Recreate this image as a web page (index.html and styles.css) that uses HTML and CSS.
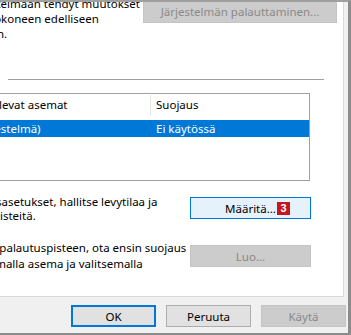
FILE: index.html
```html
<!DOCTYPE html>
<html lang="fi">
<head>
<meta charset="utf-8">
<title>Järjestelmän suojaus</title>
<link rel="stylesheet" href="styles.css">
</head>
<body>
<div class="window">
  <div class="panel">
    <section class="restore">
      <p class="desc">Voit kumota järjestelmään tehdyt muutokset<br>palauttamalla tietokoneen edelliseen<br>palautuspisteeseen.</p>
      <button class="btn disabled wide" disabled>Järjestelmän palauttaminen...</button>
    </section>
    <hr class="sep">
    <div class="list">
      <div class="list-head">
        <div class="hcell c1">Käytettävissä olevat asemat</div>
        <div class="hcell c2">Suojaus</div>
      </div>
      <div class="list-row selected">
        <div class="rcell c1">
          <svg class="drive" width="16" height="16" viewBox="0 0 16 16"><rect x="1" y="8" width="14" height="6" rx="1" fill="#d8d8d8" stroke="#7a7a7a"/><rect x="3" y="3" width="3" height="3" fill="#00a4ef"/><rect x="7" y="3" width="3" height="3" fill="#00a4ef"/><rect x="3" y="6" width="3" height="1.5" fill="#00a4ef"/><rect x="7" y="6" width="3" height="1.5" fill="#00a4ef"/><rect x="11" y="11" width="2" height="1" fill="#3c3"/></svg>
          <span>OS (C:) (Järjestelmä)</span>
        </div>
        <div class="rcell c2">Ei käytössä</div>
      </div>
    </div>
    <div class="action first">
      <p class="text t2">Määritä palautusasetukset, hallitse levytilaa ja<br>poista palautuspisteitä.</p>
      <button class="btn hot">Määritä...<span class="badge">3</span></button>
    </div>
    <div class="action second">
      <p class="text t3">Jos haluat luoda palautuspisteen, ota ensin suojaus<br>käyttöön valitsemalla asema ja valitsemalla<br>Määritä.</p>
      <button class="btn disabled luo" disabled>Luo...</button>
    </div>
  </div>
  <div class="footer">
    <button class="btn fbtn default">OK</button>
    <button class="btn fbtn">Peruuta</button>
    <button class="btn fbtn disabled" disabled>Käytä</button>
  </div>
</div>
</body>
</html>
```

FILE: styles.css
```css
* { box-sizing: border-box; }
html, body { margin: 0; padding: 0; }
body {
  width: 351px;
  height: 335px;
  overflow: hidden;
  background: #f0f0f0;
  font-family: "Noto Sans", "Segoe UI", sans-serif;
  font-size: 11.5px;
  color: #000;
}
.window {
  width: 551px;
  height: 335px;
  margin-left: -200px;
  background: #f0f0f0;
  border-top: 2px solid #a0a0a0;
  border-right: 3px solid #8c8c8c;
  border-bottom: 2px solid #8c8c8c;
  overflow: hidden;
  display: flex;
  flex-direction: column;
}
.panel {
  height: 295px;
  flex: none;
  margin-right: 4px;
  background: #fff;
  border-right: 1px solid #d9d9d9;
  border-bottom: 1px solid #d9d9d9;
}
.restore {
  display: flex;
  align-items: flex-start;
  margin-top: -2px;
  padding-left: 99px;
  padding-right: 6px;
}
.desc {
  margin: -4px 0 0;
  line-height: 15px;
  white-space: nowrap;
}
.btn {
  font: inherit;
  height: 22px;
  padding: 0;
  border: 1px solid #adadad;
  background: #e1e1e1;
  color: #000;
  white-space: nowrap;
}
.btn.disabled {
  background: #cccccc;
  border-color: #c4c4c4;
  color: #8a8a8a;
}
.btn.wide {
  margin-left: auto;
  width: 194px;
  height: 23px;
}
.sep {
  margin: 38px 0 0 208px;
  width: 316px;
  height: 0;
  border: 0;
  border-top: 1px solid #a0a0a0;
}
.list {
  margin: 13px 0 0 111px;
  width: 399px;
  height: 88px;
  border: 1px solid #a0a0a0;
}
.list-head {
  display: flex;
  height: 26px;
  padding-top: 1px;
}
.hcell {
  height: 21px;
  padding-top: 2px;
  line-height: 16px;
  white-space: nowrap;
}
.hcell.c1 {
  width: 239px;
  padding-left: 6px;
  border-right: 1px solid #e5e5e5;
}
.hcell.c2 { padding-left: 5px; }
.list-row {
  display: flex;
  height: 17px;
  line-height: 17px;
}
.list-row.selected {
  background: #0078d7;
  color: #fff;
}
.rcell { white-space: nowrap; }
.rcell.c1 {
  width: 239px;
  display: flex;
  align-items: center;
  gap: 4px;
  padding-left: 2px;
}
.rcell.c2 { padding-left: 5px; }
.drive { flex: none; }
.action {
  display: flex;
  align-items: flex-start;
  padding-left: 110px;
  padding-right: 32px;
}
.action.first { margin-top: 14px; }
.action.second { margin-top: 17px; }
.text {
  margin: 0;
  white-space: nowrap;
}
.t2 { line-height: 14px; }
.t3 {
  line-height: 16px;
  height: 32px;
  overflow: hidden;
}
.action .btn {
  margin-left: auto;
  width: 121px;
}
.btn.hot {
  position: relative;
  margin-top: 2px;
  background: #e5f1fb;
  border-color: #0078d7;
}
.btn.luo { margin-top: 5px; }
.badge {
  position: absolute;
  left: 86px;
  top: 4px;
  width: 13px;
  height: 13px;
  background: #c4161c;
  color: #fff;
  font: bold 11px/13px "Liberation Sans", sans-serif;
  text-align: center;
}
.footer {
  flex: 1;
  display: flex;
  justify-content: flex-end;
  gap: 10px;
  padding: 8px 2px 0 0;
}
.fbtn { width: 85px; }
.btn.default {
  border-color: #0078d7;
  box-shadow: inset 0 0 0 1px #0078d7;
}
```
